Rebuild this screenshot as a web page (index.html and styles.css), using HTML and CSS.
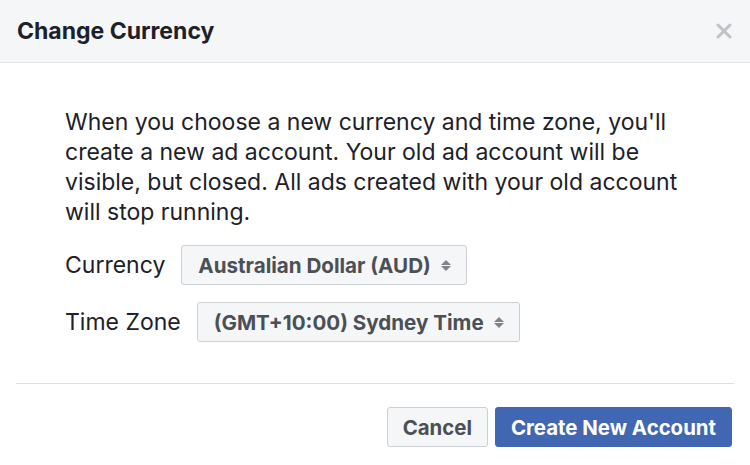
FILE: index.html
```html
<!DOCTYPE html>
<html lang="en">
<head>
    <meta charset="UTF-8">
    <title>Change Currency</title>
    <link rel="stylesheet" href="styles.css">
</head>
<body>
    <div class="dialog">
        <div class="header">
            <h1>Change Currency</h1>
            <span class="close">
                <svg width="16" height="16" viewBox="0 0 16 16"><path d="M2 2L14 14M14 2L2 14" stroke="#bec3c9" stroke-width="3" stroke-linecap="round"/></svg>
            </span>
        </div>
        <div class="body">
            <p>When you choose a new currency and time zone, you'll create a new ad account. Your old ad account will be visible, but closed. All ads created with your old account will stop running.</p>
            <div class="row">
                <label>Currency</label>
                <div class="select">Australian Dollar (AUD) <span class="arrows"></span></div>
            </div>
            <div class="row">
                <label>Time Zone</label>
                <div class="select">(GMT+10:00) Sydney Time <span class="arrows"></span></div>
            </div>
        </div>
        <div class="footer">
            <button class="btn cancel">Cancel</button>
            <button class="btn primary">Create New Account</button>
        </div>
    </div>
</body>
</html>
```
FILE: styles.css
```css
body {
    margin: 0;
    font-family: Inter, "Liberation Sans", Arial, sans-serif;
    background: #fff;
    color: #1d2129;
}

.dialog {
    width: 750px;
    height: 465px;
    background: #fff;
}

.header {
    height: 62px;
    background: #f5f6f7;
    border-bottom: 1px solid #e5e5e5;
    display: flex;
    align-items: center;
    justify-content: space-between;
    padding: 0 18px 0 17px;
}

h1 {
    margin: 0;
    font-size: 23px;
    font-weight: 700;
    color: #1d2129;
}

.close {
    display: flex;
}

.body {
    padding: 44px 60px 0 65px;
}

p {
    margin: 0 0 18px 0;
    font-size: 23px;
    line-height: 30px;
}

.row {
    display: flex;
    align-items: center;
    gap: 16px;
    margin-bottom: 17px;
}

label {
    font-size: 23px;
}

.select {
    height: 38px;
    display: flex;
    align-items: center;
    gap: 10px;
    padding: 0 15px 0 16px;
    background: #f5f6f7;
    border: 1px solid #ccd0d5;
    border-radius: 3px;
    font-size: 20.6px;
    font-weight: 700;
    color: #4b4f56;
}

.arrows {
    display: inline-flex;
    flex-direction: column;
    gap: 1px;
}

.arrows::before,
.arrows::after {
    content: "";
    border-left: 5px solid transparent;
    border-right: 5px solid transparent;
}

.arrows::before {
    border-bottom: 5px solid #7f848b;
}

.arrows::after {
    border-top: 5px solid #7f848b;
}

.footer {
    margin: 41px 16px 0 16px;
    border-top: 1px solid #dddfe2;
    padding: 23px 2px 0 0;
    display: flex;
    justify-content: flex-end;
    gap: 7px;
}

.btn {
    height: 40px;
    border-radius: 3px;
    font-family: Inter, "Liberation Sans", Arial, sans-serif;
    font-size: 20.4px;
    font-weight: 700;
    padding: 0 15px;
    cursor: pointer;
}

.cancel {
    background: #f5f6f7;
    border: 1px solid #ccd0d5;
    color: #4b4f56;
}

.primary {
    background: #4267b2;
    border: 1px solid #4267b2;
    color: #fff;
}
```
